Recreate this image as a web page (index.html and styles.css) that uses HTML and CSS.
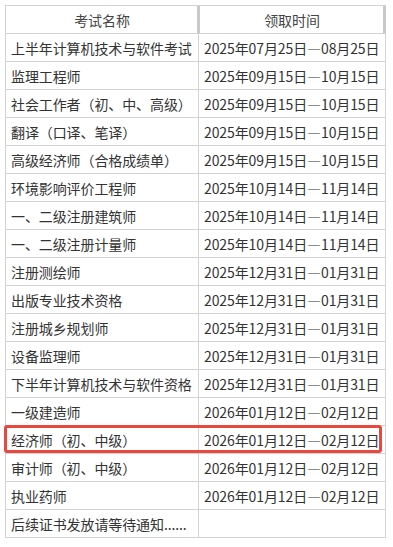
FILE: index.html
```html
<!DOCTYPE html>
<html lang="zh-CN">
<head>
<meta charset="utf-8">
<title>证书领取时间</title>
<link rel="stylesheet" href="styles.css">
</head>
<body>
<div class="table">
  <div class="row head"><div class="cell c1">考试名称</div><div class="cell c2">领取时间</div></div>
  <div class="row"><div class="cell c1">上半年计算机技术与软件考试</div><div class="cell c2">2025年07月25日—08月25日</div></div>
  <div class="row"><div class="cell c1">监理工程师</div><div class="cell c2">2025年09月15日—10月15日</div></div>
  <div class="row"><div class="cell c1">社会工作者（初、中、高级）</div><div class="cell c2">2025年09月15日—10月15日</div></div>
  <div class="row"><div class="cell c1">翻译（口译、笔译）</div><div class="cell c2">2025年09月15日—10月15日</div></div>
  <div class="row"><div class="cell c1">高级经济师（合格成绩单）</div><div class="cell c2">2025年09月15日—10月15日</div></div>
  <div class="row"><div class="cell c1">环境影响评价工程师</div><div class="cell c2">2025年10月14日—11月14日</div></div>
  <div class="row"><div class="cell c1">一、二级注册建筑师</div><div class="cell c2">2025年10月14日—11月14日</div></div>
  <div class="row"><div class="cell c1">一、二级注册计量师</div><div class="cell c2">2025年10月14日—11月14日</div></div>
  <div class="row"><div class="cell c1">注册测绘师</div><div class="cell c2">2025年12月31日—01月31日</div></div>
  <div class="row"><div class="cell c1">出版专业技术资格</div><div class="cell c2">2025年12月31日—01月31日</div></div>
  <div class="row"><div class="cell c1">注册城乡规划师</div><div class="cell c2">2025年12月31日—01月31日</div></div>
  <div class="row"><div class="cell c1">设备监理师</div><div class="cell c2">2025年12月31日—01月31日</div></div>
  <div class="row"><div class="cell c1">下半年计算机技术与软件资格</div><div class="cell c2">2025年12月31日—01月31日</div></div>
  <div class="row"><div class="cell c1">一级建造师</div><div class="cell c2">2026年01月12日—02月12日</div></div>
  <div class="row mark"><div class="cell c1">经济师（初、中级）</div><div class="cell c2">2026年01月12日—02月12日</div></div>
  <div class="row"><div class="cell c1">审计师（初、中级）</div><div class="cell c2">2026年01月12日—02月12日</div></div>
  <div class="row"><div class="cell c1">执业药师</div><div class="cell c2">2026年01月12日—02月12日</div></div>
  <div class="row"><div class="cell c1">后续证书发放请等待通知......</div><div class="cell c2"></div></div>
</div>
</body>
</html>
```
FILE: styles.css
```css
html, body {
  margin: 0;
  padding: 0;
  background: #ffffff;
}
body {
  padding: 5px 0 0 5px;
  font-family: "Noto Sans CJK SC", "Microsoft YaHei", sans-serif;
  font-size: 14px;
  color: #333333;
}
.table {
  width: 381px;
  border-left: 1px solid #d3d3d3;
  border-top: 1px solid #d3d3d3;
  box-sizing: border-box;
}
.row {
  display: grid;
  grid-template-columns: 193px 187px;
  height: 28px;
  position: relative;
}
.cell {
  border-right: 1px solid #d3d3d3;
  border-bottom: 1px solid #d3d3d3;
  box-sizing: border-box;
  display: flex;
  align-items: center;
  padding: 0 0 0 5px;
  white-space: nowrap;
  letter-spacing: -0.1px;
}
.c2 {
  padding-left: 5px;
}
.head {
  height: 28px;
}
.head .cell {
  justify-content: center;
  padding: 0;
  color: #444444;
  height: 28px;
}
.head .c1 {
  border-right-color: #c9c9c9;
  box-shadow: inset -1px 0 0 #c9c9c9;
}
.head .c2 {
  border-right-color: #c9c9c9;
  box-shadow: inset 1px 0 0 #c9c9c9, inset -2px 0 0 #c9c9c9;
}
.mark::after {
  content: "";
  position: absolute;
  left: -2px;
  top: -1px;
  width: 378px;
  height: 28px;
  border: 3px solid #e8483d;
  border-radius: 3px;
  box-sizing: border-box;
  pointer-events: none;
}
```
